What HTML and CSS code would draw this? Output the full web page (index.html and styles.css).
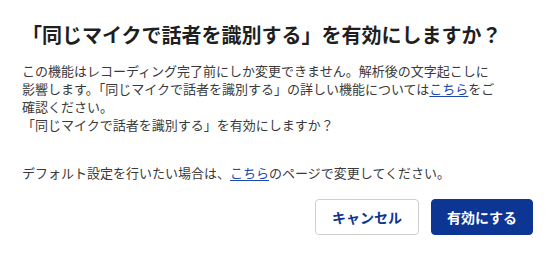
FILE: index.html
```html
<!DOCTYPE html>
<html lang="ja">
<head>
<meta charset="utf-8">
<link rel="stylesheet" href="styles.css">
</head>
<body>
<div class="dialog">
  <h1 class="title">「同じマイクで話者を識別する」を有効にしますか？</h1>
  <p class="text">この機能はレコーディング完了前にしか変更できません。解析後の文字起こしに<br>影響します。「同じマイクで話者を識別する」の詳しい機能については<a class="link" href="#">こちら</a>をご<br>確認ください。<br>「同じマイクで話者を識別する」を有効にしますか？</p>
  <p class="text text-second">デフォルト設定を行いたい場合は、<a class="link" href="#">こちら</a>のページで変更してください。</p>
  <div class="actions">
    <button class="btn btn-cancel">キャンセル</button>
    <button class="btn btn-primary">有効にする</button>
  </div>
</div>
</body>
</html>
```
FILE: styles.css
```css
html, body {
  margin: 0;
  padding: 0;
  background: #ffffff;
}
body {
  font-family: "Noto Sans CJK JP", "Noto Sans", sans-serif;
  width: 555px;
  height: 260px;
  overflow: hidden;
}
.dialog {
  padding: 20px 22px 0 22px;
  box-sizing: border-box;
}
.title {
  margin: 0;
  font-size: 20px;
  line-height: 30px;
  font-weight: 700;
  color: #1f1f1f;
  white-space: nowrap;
}
.text {
  margin: 12px 0 0 0;
  font-size: 13px;
  line-height: 18px;
  color: #3a3a3a;
  white-space: nowrap;
}
.text-second {
  margin-top: 30px;
}
.link {
  color: #1d48b0;
  text-decoration: underline;
  text-underline-offset: 2px;
}
.actions {
  display: flex;
  justify-content: flex-end;
  gap: 12px;
  margin-top: 17px;
}
.btn {
  height: 36px;
  padding: 0;
  font-family: inherit;
  font-size: 14px;
  font-weight: 700;
  border-radius: 4px;
  box-sizing: border-box;
  white-space: nowrap;
  cursor: pointer;
}
.btn-cancel {
  background: #ffffff;
  color: #0e3591;
  border: 1px solid #cfcfcf;
  width: 104px;
}
.btn-primary {
  background: #0d3594;
  color: #ffffff;
  border: 1px solid #0d3594;
  width: 102px;
}
```
